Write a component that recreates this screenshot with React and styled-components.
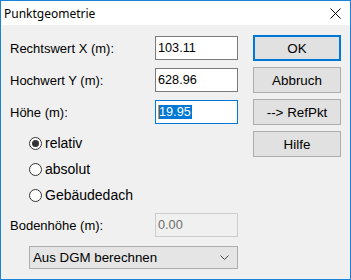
import React from 'react';
import styled, { createGlobalStyle } from 'styled-components';

const Global = createGlobalStyle`
  html, body { margin: 0; padding: 0; background: #ffffff; }
  * { box-sizing: border-box; }
`;

const Window = styled.div`
  width: 351px;
  height: 280px;
  border: 1px solid #1883d7;
  display: flex;
  flex-direction: column;
  font-family: "Liberation Sans", Arial, sans-serif;
  font-size: 13px;
  color: #000;
`;

const TitleBar = styled.div`
  height: 24px;
  background: #ffffff;
  display: flex;
  align-items: center;
  justify-content: space-between;
  padding: 0 9px 0 3px;
  font-family: "Noto Sans", "Open Sans", sans-serif;
  font-size: 12px;
`;

const Body = styled.div`
  flex: 1;
  background: #f0f0f0;
  display: flex;
  padding: 10px 0 0 9px;
`;

const Form = styled.div`
  width: 228px;
  display: flex;
  flex-direction: column;
`;

const FieldRow = styled.div`
  display: grid;
  grid-template-columns: 145px 83px;
  align-items: center;
  height: 24px;
  margin-top: ${p => p.$top || 0}px;
`;

const Input = styled.div`
  height: 24px;
  border: 1px solid ${p => (p.$focus ? '#0078d7' : p.$disabled ? '#cccccc' : '#7a7a7a')};
  background: ${p => (p.$disabled ? '#f0f0f0' : '#ffffff')};
  color: ${p => (p.$disabled ? '#6d6d6d' : '#000')};
  display: flex;
  align-items: center;
  padding-left: 2px;
  font-size: 12.7px;
`;

const Selection = styled.span`
  background: #0078d7;
  color: #fff;
  border-left: 1px solid #e8892e;
  line-height: 14px;
  padding-right: 1px;
`;

const Radios = styled.div`
  margin: 6px 0 0 19px;
  display: flex;
  flex-direction: column;
  font-size: 14px;
`;

const RadioRow = styled.div`
  height: 26px;
  display: flex;
  align-items: center;
  gap: 3px;
`;

const Circle = styled.span`
  width: 13px;
  height: 13px;
  border-radius: 50%;
  border: 1px solid #333;
  background: #fff;
  display: flex;
  align-items: center;
  justify-content: center;
  &::after {
    content: '';
    width: 7px;
    height: 7px;
    border-radius: 50%;
    background: ${p => (p.$checked ? '#333' : 'transparent')};
  }
`;

const Select = styled.div`
  margin: 9px 0 0 19px;
  height: 23px;
  border: 1px solid #adadad;
  background: #e5e5e5;
  display: flex;
  align-items: center;
  justify-content: space-between;
  padding: 0 8px 0 3px;
  font-size: 13.3px;
`;

const Buttons = styled.div`
  margin: 0 0 0 15px;
  width: 88px;
  display: flex;
  flex-direction: column;
  gap: 6px;
  font-size: 13.4px;
`;

const Button = styled.div`
  height: 26px;
  border: ${p => (p.$default ? '2px solid #0078d7' : '1px solid #adadad')};
  background: #e1e1e1;
  display: flex;
  align-items: center;
  justify-content: center;
`;

const Radio = ({ checked, children }) => (
  <RadioRow>
    <Circle $checked={checked} />
    <span>{children}</span>
  </RadioRow>
);

export default function App() {
  return (
    <>
      <Global />
      <Window>
        <TitleBar>
          <span>Punktgeometrie</span>
          <svg width="11" height="11" viewBox="0 0 11 11">
            <path d="M0.5 0.5 L10.5 10.5 M10.5 0.5 L0.5 10.5" stroke="#000" strokeWidth="1" />
          </svg>
        </TitleBar>
        <Body>
          <Form>
            <FieldRow $top={1}>
              <span>Rechtswert X (m):</span>
              <Input>103.11</Input>
            </FieldRow>
            <FieldRow $top={8}>
              <span>Hochwert Y (m):</span>
              <Input>628.96</Input>
            </FieldRow>
            <FieldRow $top={8}>
              <span>Höhe (m):</span>
              <Input $focus><Selection>19.95</Selection></Input>
            </FieldRow>
            <Radios>
              <Radio checked>relativ</Radio>
              <Radio>absolut</Radio>
              <Radio>Gebäudedach</Radio>
            </Radios>
            <FieldRow $top={5}>
              <span>Bodenhöhe (m):</span>
              <Input $disabled>0.00</Input>
            </FieldRow>
            <Select>
              <span>Aus DGM berechnen</span>
              <svg width="9" height="5" viewBox="0 0 9 5">
                <path d="M0.5 0.5 L4.5 4.5 L8.5 0.5" stroke="#444" fill="none" strokeWidth="1" />
              </svg>
            </Select>
          </Form>
          <Buttons>
            <Button $default>OK</Button>
            <Button>Abbruch</Button>
            <Button>--&gt; RefPkt</Button>
            <Button>Hilfe</Button>
          </Buttons>
        </Body>
      </Window>
    </>
  );
}
